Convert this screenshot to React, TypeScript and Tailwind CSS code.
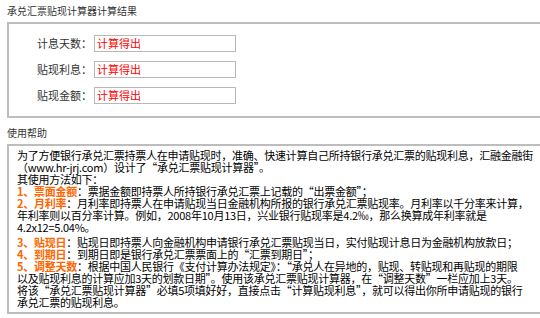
const ORANGE = 'text-[#ff6600] font-bold';

const rows = ['计息天数：', '贴现利息：', '贴现金额：'];

function ResultRow({ label }: { label: string }) {
  return (
    <div className="flex items-center h-[17px]">
      <div className="w-[83px] text-right text-[11px] leading-[17px] text-[#333]">{label}</div>
      <div className="ml-[2px] w-[142px] h-[17px] border border-[#b8b8b8] bg-white pl-[2px] text-[11px] leading-[15px] text-[#ff0000]">
        计算得出
      </div>
    </div>
  );
}

function Item({ n, title, children }: { n: string; title: string; children: React.ReactNode }) {
  return (
    <div>
      <span className={ORANGE}>
        {n}、{title}
      </span>
      ：{children}
    </div>
  );
}

export default function App() {
  return (
    <div
      className="w-[540px] h-[318px] overflow-hidden bg-white pl-[7px] text-black"
      style={{ fontFamily: '"Noto Sans CJK SC", "Liberation Sans", sans-serif' }}
    >
      <div className="pt-[5px] h-[22px] text-[10px] leading-[12px] text-[#333]">承兑汇票贴现计算器计算结果</div>

      <div className="w-[540px] h-[96px] border-2 border-[#bdbdbd] border-r-0 pt-[11px] flex flex-col gap-[9px]">
        {rows.map(r => (
          <ResultRow key={r} label={r} />
        ))}
      </div>

      <div className="pt-[9px] h-[26px] text-[10px] leading-[12px] text-[#333]">使用帮助</div>

      <div className="w-[540px] h-[170px] border-2 border-[#bdbdbd] border-r-0 pl-[8px] pt-[3px] text-[11px] leading-[12px] tracking-[-0.25px] whitespace-nowrap">
        <div>为了方便银行承兑汇票持票人在申请贴现时，准确、快速计算自己所持银行承兑汇票的贴现利息，汇融金融街</div>
        <div>（www.hr-jrj.com）设计了“承兑汇票贴现计算器”。</div>
        <div>其使用方法如下：</div>
        <Item n="1" title="票面金额">票据金额即持票人所持银行承兑汇票上记载的“出票金额”；</Item>
        <Item n="2" title="月利率">月利率即持票人在申请贴现当日金融机构所报的银行承兑汇票贴现率。月利率以千分率来计算，</Item>
        <div>年利率则以百分率计算。例如，2008年10月13日，兴业银行贴现率是4.2‰，那么换算成年利率就是</div>
        <div className="mb-[3px]">4.2x12=5.04%。</div>
        <Item n="3" title="贴现日">贴现日即持票人向金融机构申请银行承兑汇票贴现当日，实付贴现计息日为金融机构放款日；</Item>
        <Item n="4" title="到期日">到期日即是银行承兑汇票票面上的“汇票到期日”；</Item>
        <Item n="5" title="调整天数">根据中国人民银行《支付计算办法规定》：“承兑人在异地的，贴现、转贴现和再贴现的期限</Item>
        <div>以及贴现利息的计算应加3天的划款日期”。使用该承兑汇票贴现计算器，在“调整天数”一栏应加上3天。</div>
        <div>将该“承兑汇票贴现计算器”必填5项填好好，直接点击“计算贴现利息”，就可以得出你所申请贴现的银行</div>
        <div>承兑汇票的贴现利息。</div>
      </div>
    </div>
  );
}
